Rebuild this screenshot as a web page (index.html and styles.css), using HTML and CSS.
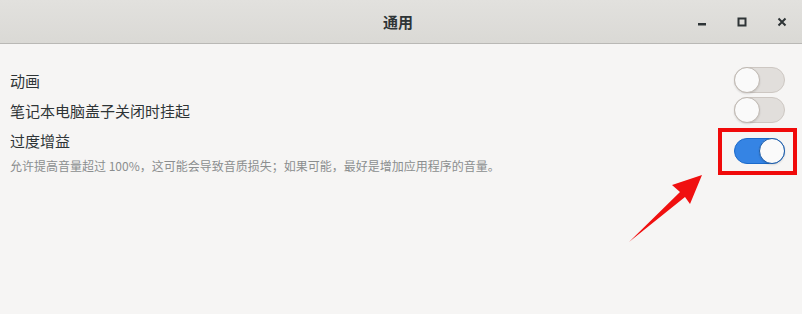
FILE: index.html
```html
<!DOCTYPE html>
<html>
<head>
<meta charset="utf-8">
<meta name="viewport" content="width=device-width, initial-scale=1">
<link rel="stylesheet" href="styles.css">
</head>
<body>
<div class="window">
  <div class="titlebar">
    <span></span>
    <h1 class="title">通用</h1>
    <div class="controls">
      <span class="ctl"><svg width="10" height="10" viewBox="0 0 10 10"><rect x="1" y="6" width="8" height="2.5" fill="#2e3436"/></svg></span>
      <span class="ctl"><svg width="10" height="10" viewBox="0 0 10 10"><rect x="1.5" y="1.5" width="7" height="7" fill="none" stroke="#2e3436" stroke-width="2"/></svg></span>
      <span class="ctl"><svg width="10" height="10" viewBox="0 0 10 10"><path d="M1.5 1.5 L8.5 8.5 M8.5 1.5 L1.5 8.5" stroke="#2e3436" stroke-width="2"/></svg></span>
    </div>
  </div>

  <div class="content">
    <div class="row">
      <span class="label">动画</span>
      <span class="switch"><span class="knob"></span></span>
    </div>
    <div class="row">
      <span class="label">笔记本电脑盖子关闭时挂起</span>
      <span class="switch"><span class="knob"></span></span>
    </div>
    <div class="row row-desc">
      <div>
        <div class="label">过度增益</div>
        <div class="desc">允许提高音量超过 100%，这可能会导致音质损失；如果可能，最好是增加应用程序的音量。</div>
      </div>
      <span class="marked">
        <span class="switch on"><span class="knob"></span></span>
        <span class="highlight"></span>
      </span>
    </div>
  </div>

  <!-- annotation arrow pointing at the switch -->
  <svg class="arrow" width="802" height="314" viewBox="0 0 802 314">
    <polygon points="702,175 672,185 680,192 629,242 685,197 690,204" fill="#f01010"/>
  </svg>
</div>
</body>
</html>
```

FILE: styles.css
```css
body {
  margin: 0;
  background: #f6f5f4;
  font-family: "Noto Sans CJK SC", "Noto Sans", sans-serif;
  color: #2e3436;
}

.window {
  position: relative;
  width: 802px;
  height: 314px;
  overflow: hidden;
}

/* header bar */
.titlebar {
  display: grid;
  grid-template-columns: 1fr auto 1fr;
  align-items: center;
  height: 43px;
  background: linear-gradient(#e2e1de, #dad9d5);
  border-bottom: 1px solid #b9b8b5;
}

.title {
  margin: 0;
  font-size: 15px;
  font-weight: bold;
  color: #2e3436;
  position: relative;
  left: -3px;
}

.controls {
  justify-self: end;
  display: flex;
}

.ctl {
  width: 40px;
  height: 43px;
  display: flex;
  align-items: center;
  justify-content: center;
}

/* settings list */
.content {
  padding: 21px 17px 0 10px;
}

.row {
  display: flex;
  justify-content: space-between;
  align-items: center;
  height: 30px;
}

.row-desc {
  height: auto;
  padding-top: 5px;
}

.label {
  font-size: 15px;
  line-height: 22px;
}

.row > .label {
  line-height: 30px;
  padding-top: 2px;
}

.desc {
  margin-top: 4px;
  font-size: 12px;
  line-height: 20px;
  color: #8b8e8f;
}

/* toggle switch */
.switch {
  position: relative;
  display: block;
  width: 51px;
  height: 26px;
  box-sizing: border-box;
  border-radius: 13px;
  background: #e1dedb;
  border: 1px solid #cdc7c2;
}

.knob {
  position: absolute;
  top: -1px;
  left: -1px;
  width: 26px;
  height: 26px;
  box-sizing: border-box;
  border-radius: 50%;
  background: #fafafa;
  border: 1px solid #bfb8b1;
  box-shadow: 0 1px 2px rgba(0,0,0,0.12);
}

.switch.on {
  background: #3584e4;
  border-color: #1b6acb;
}

.switch.on .knob {
  left: auto;
  right: -1px;
  border-color: #1b5ba8;
}

/* red annotation box */
.marked {
  position: relative;
  display: block;
  margin-top: -4px;
}

.highlight {
  position: absolute;
  top: -10px;
  left: -16px;
  right: -12px;
  bottom: -11px;
  border: 4px solid #f00a0a;
}

.arrow {
  position: absolute;
  top: 0;
  left: 0;
}
```
